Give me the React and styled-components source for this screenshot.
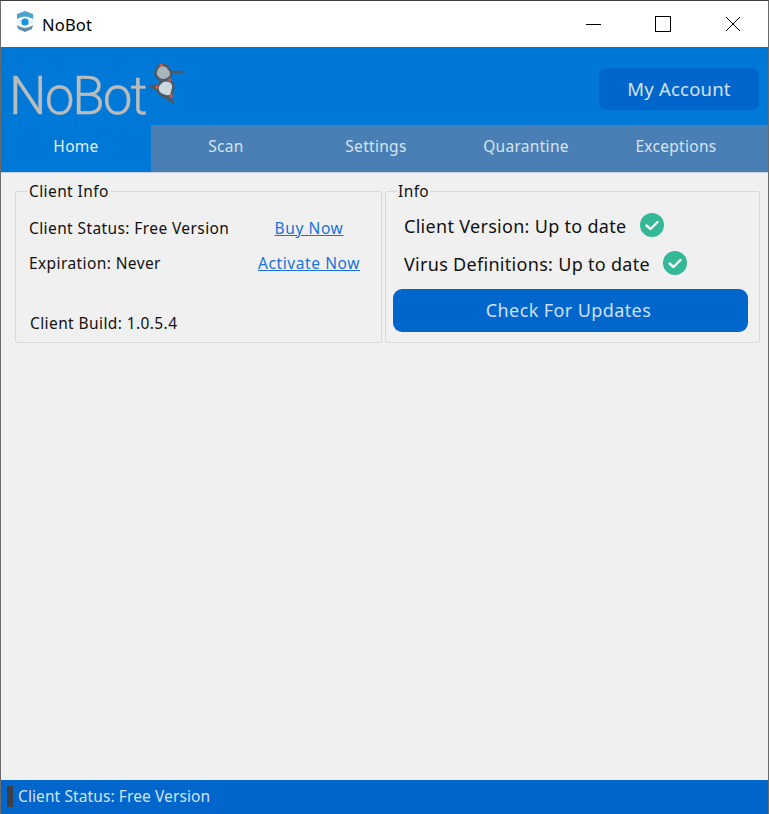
import React from 'react';
import styled, { createGlobalStyle } from 'styled-components';

const Global = createGlobalStyle`
    html, body { margin:0; padding:0; background:#f0f0f0; }
    * { box-sizing:border-box; }
    body { font-family:"Noto Sans","Open Sans",sans-serif; }
`;

const Window = styled.div`
    width:769px;
    height:814px;
    display:flex;
    flex-direction:column;
    border:1px solid #6b6b6b;
    border-top-color:#3c3c3c;
    border-bottom:none;
    background:#f0f0f0;
`;

const TitleBar = styled.div`
    height:46px;
    background:#fff;
    display:flex;
    align-items:center;
    padding-left:14px;
`;

const TitleIcon = styled.svg`
    display:block;
    margin-top:-5px;
`;

const TitleText = styled.span`
    margin-left:7px;
    font-size:16.5px;
    letter-spacing:.2px;
    color:#000;
`;

const WinButtons = styled.div`
    margin-left:auto;
    display:flex;
    height:100%;
`;

const WinButton = styled.div`
    width:70px;
    display:flex;
    align-items:center;
    justify-content:center;
`;

const Header = styled.div`
    height:78px;
    background:#0078d7;
    display:flex;
    align-items:flex-start;
    justify-content:space-between;
    padding:13px 9px 0 8px;
`;

const Logo = styled.div`
    display:flex;
    align-items:flex-start;
`;

const LogoText = styled.span`
    margin-top:4px;
    font-family:Roboto,sans-serif;
    font-weight:300;
    font-size:53px;
    line-height:64px;
    letter-spacing:-2px;
    color:#bcbcbc;
    -webkit-text-stroke:.4px #bcbcbc;
`;

const LogoBot = styled.svg`
    display:block;
`;

const AccountButton = styled.div`
    width:160px;
    height:42px;
    margin-top:8px;
    padding-bottom:1px;
    border-radius:7px;
    background:#0066cc;
    color:#d3e2f4;
    font-size:18.5px;
    letter-spacing:.2px;
    display:flex;
    align-items:center;
    justify-content:center;
`;

const Tabs = styled.div`
    height:48px;
    background:#4a7fb5;
    border-bottom:1px solid #c4d0dc;
    display:flex;
`;

const Tab = styled.div`
    width:150px;
    display:flex;
    align-items:center;
    justify-content:center;
    font-size:15.5px;
    letter-spacing:.3px;
    padding-bottom:6px;
    color:${p => (p.$active ? '#e4effa' : '#d8e3ee')};
    background:${p => (p.$active ? '#0078d7' : 'transparent')};
`;

const Groups = styled.div`
    display:flex;
    gap:3px;
    padding:8px 8px 0 14px;
`;

const Group = styled.fieldset`
    margin:0;
    padding:0;
    min-width:0;
    height:162px;
    width:${p => p.$width}px;
    border:1px solid #d9d9d9;
    border-radius:2px;
`;

const Legend = styled.legend`
    margin-left:${p => p.$left}px;
    padding:0 1px 0 1px;
    font-size:15.5px;
    letter-spacing:.4px;
    line-height:20px;
    color:#111;
`;

const ClientGrid = styled.div`
    display:grid;
    grid-template-columns:226px 1fr;
    grid-auto-rows:35px;
    padding:9px 18px 0 13px;
    align-items:center;
`;

const Label = styled.span`
    font-size:15.5px;
    letter-spacing:.4px;
    color:#111;
    white-space:nowrap;
`;

const BuildLabel = styled(Label)`
    display:block;
    margin:32px 0 0 14px;
`;

const Action = styled.a`
    justify-self:center;
    font-size:15.5px;
    letter-spacing:.6px;
    color:#1a73d8;
    text-decoration:underline;
`;

const StatusRows = styled.div`
    display:flex;
    flex-direction:column;
    padding:6px 11px 0 7px;
`;

const StatusRow = styled.div`
    height:38px;
    display:flex;
    align-items:center;
    gap:13px;
    padding-left:11px;
    font-size:18px;
    letter-spacing:.3px;
    color:#111;
`;

const Badge = styled.svg`
    display:block;
    margin-top:-3px;
`;

const UpdateButton = styled.div`
    height:43px;
    margin-top:6px;
    padding:0 4px 2px 0;
    border-radius:9px;
    background:#0066cc;
    color:#cfe0f4;
    font-size:18px;
    letter-spacing:.4px;
    display:flex;
    align-items:center;
    justify-content:center;
`;

const Spacer = styled.div`
    flex:1;
`;

const StatusBar = styled.div`
    height:34px;
    padding:0 0 2px 6px;
    background:#0066cc;
    display:flex;
    align-items:center;
    gap:5px;
    color:#d3e2f4;
    font-size:15.5px;
    letter-spacing:.1px;
`;

const StatusGrip = styled.div`
    width:6px;
    height:21px;
    background:#3f3f46;
`;

const AppIcon = () => (
    <TitleIcon width="20" height="22" viewBox="0 0 20 22">
        <path d="M2 3 L10 0 L18 3 L18 8 Q10 3 2 8 Z" fill="#4aa3cf" />
        <path d="M1 11 Q10 3 19 11 Q10 19 1 11 Z" fill="#e6f3fa" />
        <circle cx="10" cy="11" r="3.6" fill="#1593dc" />
        <path d="M2 14 Q10 20 18 14 L17 18 L10 21 L3 18 Z" fill="#5d8fa8" />
    </TitleIcon>
);

const BotMark = () => (
    <LogoBot width="40" height="45" viewBox="0 0 40 45">
        <path d="M22 12 H38" stroke="#4c5a66" strokeWidth="2.5" fill="none" />
        <path d="M1 27 L14 23 L14 31 Z" fill="#4c5a66" />
        <path d="M23 34 L28 43 L18 37 Z" fill="#4c5a66" stroke="#4c5a66" strokeWidth="1.5" strokeLinejoin="round" />
        <path d="M14 5 C18 4 22 6 23 9 C26 11 26 16 23 18 C20 21 14 21 12 18 C8 15 9 9 14 5 Z" fill="#a9b5bd" stroke="#4c5a66" strokeWidth="2.5" strokeLinejoin="round" />
        <path d="M14 23 C17 20 21 20 24 21 C27 22 28 26 27 29 C26 32 26 34 25 36 C21 37 16 36 13 33 C11 30 11 26 14 23 Z" fill="#cbd8e0" stroke="#4c5a66" strokeWidth="2.5" strokeLinejoin="round" />
        <circle cx="15" cy="5" r="1.7" fill="#d2564a" />
        <circle cx="24" cy="20" r="1.7" fill="#d2564a" />
        <circle cx="11" cy="27" r="1.7" fill="#d2564a" />
        <circle cx="25" cy="36" r="1.7" fill="#d2564a" />
    </LogoBot>
);

const CheckBadge = () => (
    <Badge width="24" height="24" viewBox="0 0 24 24">
        <circle cx="12" cy="12" r="12" fill="#34b898" />
        <path d="M6.5 12.5 L10.5 16 L17.5 9" fill="none" stroke="#fff" strokeWidth="2.4" strokeLinecap="round" strokeLinejoin="round" />
    </Badge>
);

const tabs = ['Home', 'Scan', 'Settings', 'Quarantine', 'Exceptions'];

function App() {
    return (
        <Window>
            <Global />
            <TitleBar>
                <AppIcon />
                <TitleText>NoBot</TitleText>
                <WinButtons>
                    <WinButton>
                        <svg width="16" height="16"><path d="M1 8.5H16" stroke="#000" /></svg>
                    </WinButton>
                    <WinButton>
                        <svg width="16" height="16"><rect x="0.5" y="0.5" width="15" height="15" fill="none" stroke="#000" /></svg>
                    </WinButton>
                    <WinButton>
                        <svg width="16" height="16"><path d="M1 1L15 15M15 1L1 15" stroke="#000" /></svg>
                    </WinButton>
                </WinButtons>
            </TitleBar>
            <Header>
                <Logo>
                    <LogoText>NoBot</LogoText>
                    <BotMark />
                </Logo>
                <AccountButton>My Account</AccountButton>
            </Header>
            <Tabs>
                {tabs.map((t, i) => (
                    <Tab key={t} $active={i === 0}>{t}</Tab>
                ))}
            </Tabs>
            <Groups>
                <Group $width={367}>
                    <Legend $left={12}>Client Info</Legend>
                    <ClientGrid>
                        <Label>Client Status: Free Version</Label>
                        <Action>Buy Now</Action>
                        <Label>Expiration: Never</Label>
                        <Action>Activate Now</Action>
                    </ClientGrid>
                    <BuildLabel>Client Build: 1.0.5.4</BuildLabel>
                </Group>
                <Group $width={375}>
                    <Legend $left={11}>Info</Legend>
                    <StatusRows>
                        <StatusRow>Client Version: Up to date <CheckBadge /></StatusRow>
                        <StatusRow>Virus Definitions: Up to date <CheckBadge /></StatusRow>
                        <UpdateButton>Check For Updates</UpdateButton>
                    </StatusRows>
                </Group>
            </Groups>
            <Spacer />
            <StatusBar>
                <StatusGrip />
                Client Status: Free Version
            </StatusBar>
        </Window>
    );
}

export default App;
